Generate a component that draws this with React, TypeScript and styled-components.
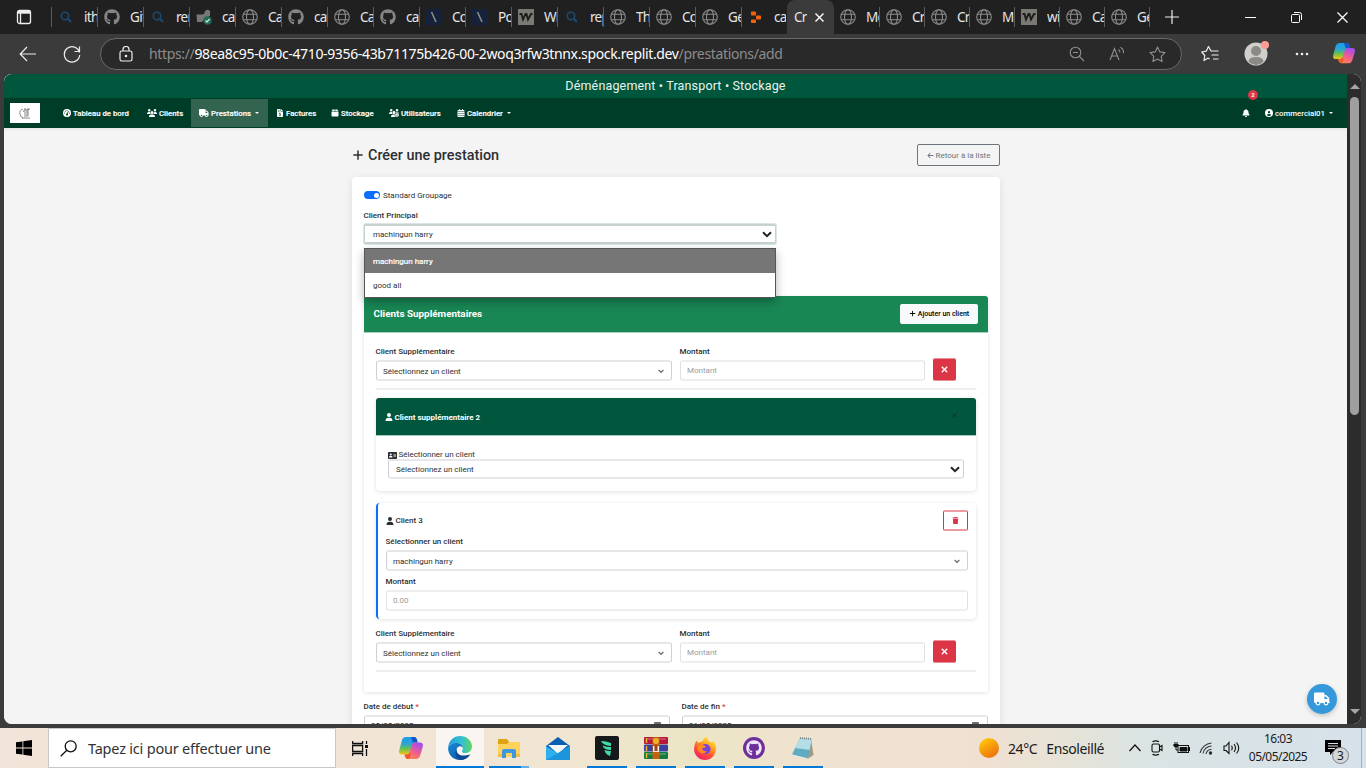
import React from 'react';
import styled, { createGlobalStyle, css } from 'styled-components';
import {
  FaUsers, FaTruck, FaFileInvoiceDollar, FaBox, FaUsersGear, FaCalendarDays, FaBell, FaCircleUser,
  FaPlus, FaArrowLeft, FaXmark, FaUser, FaAddressCard, FaTrash, FaGaugeHigh, FaGithub,
} from 'react-icons/fa6';

const Global = createGlobalStyle`
  * { box-sizing: border-box; }
  html, body { margin: 0; padding: 0; overflow: hidden; background: #3b3b3b; }
  svg { display: block; flex: none; }
`;

const Screen = styled.div`
  width: 1366px; height: 768px; display: flex; flex-direction: column; overflow: hidden;
  background: #3b3b3b; font-family: "Noto Sans", "Open Sans", sans-serif;
`;

/* ---------- browser tabs ---------- */
const TabStrip = styled.div`
  height: 34px; flex: none; background: #202020; display: flex; color: #e6e6e6; font-size: 13.5px;
`;
const TabMenu = styled.div`
  width: 52px; flex: none; display: flex; align-items: center; padding-left: 16px; border-right: 1px solid #5c5c5c;
  height: 20px; margin-top: 7px;
`;
const Tab = styled.div<{ $w: number; $noline?: boolean }>`
  width: ${p => p.$w}px; height: 20px; margin-top: 7px; flex: none; display: flex; align-items: center;
  padding-left: 6px; gap: 10px; border-right: 1px solid ${p => (p.$noline ? 'transparent' : '#5c5c5c')};
  overflow: hidden; white-space: nowrap;
  span { flex: none; width: 13px; overflow: hidden; letter-spacing: -0.7px; line-height: 20px; }
`;
const ActiveTab = styled.div`
  width: 47px; flex: none; height: 34px; background: #3b3b3b; border-radius: 8px 8px 0 0; display: flex;
  align-items: center; padding-left: 7px; gap: 8px;
  span { width: 13px; overflow: hidden; letter-spacing: -0.7px; }
`;
const NewTab = styled.div`
  width: 43px; flex: none; display: flex; justify-content: center; align-items: center;
`;
const WindowButtons = styled.div`
  flex: 1; display: flex; justify-content: flex-end; align-items: center; gap: 35px; padding-right: 18px;
`;

type Fav = 'search' | 'github' | 'key' | 'globe' | 'slash' | 'w' | 'replit';

function Favicon({ kind }: { kind: Fav }) {
  if (kind === 'github') return <FaGithub size={16} color="#858585" />;
  if (kind === 'search')
    return (
      <svg width="16" height="16" viewBox="0 0 16 16" fill="none" stroke="#1d4a70" strokeWidth="1.6">
        <circle cx="7" cy="7" r="3.7" /><path d="M9.8 9.8 13 13" strokeWidth="2" />
      </svg>
    );
  if (kind === 'globe')
    return (
      <svg width="16" height="16" viewBox="0 0 16 16" fill="none" stroke="#8a8a8a" strokeWidth="1.1">
        <circle cx="8" cy="8" r="7.3" /><ellipse cx="8" cy="8" rx="3.5" ry="7.3" /><path d="M1.4 5.3h13.2M1.4 10.7h13.2" />
      </svg>
    );
  if (kind === 'slash')
    return (
      <svg width="16" height="16" viewBox="0 0 16 16"><path fill="#16213c" d="M0 0h16v16H0z" /><path d="m5.5 3 4.5 10" stroke="#8b8c82" strokeWidth="1.6" /></svg>
    );
  if (kind === 'w')
    return (
      <svg width="16" height="16" viewBox="0 0 16 16"><path fill="#7a7973" d="M0 0h16v16H0z" /><path d="M1.500 5h2L5 10.500 7.500 5h1L10 10.500 13 5h1.500" fill="none" stroke="#1c1c1b" strokeWidth="1.8" /></svg>
    );
  if (kind === 'replit')
    return (
      <svg width="16" height="16" viewBox="0 0 16 16" fill="#f26207"><rect x="3" y="2.500" width="5" height="4" rx=".8" /><rect x="8" y="6.500" width="5" height="4" rx=".8" /><rect x="3" y="10.500" width="5" height="3.500" rx=".8" /></svg>
    );
  return (
    <svg width="16" height="16" viewBox="0 0 16 16">
      <path d="M.5 5.500h5.500l2.500-1V3q2.500-4 5.500-1v5l-5 2-3 4H1z" fill="#777" /><circle cx="11.500" cy="11.500" r="4.300" fill="#1d6b52" />
      <path d="m9.500 11.500 1.500 1.500 2.600-3" fill="none" stroke="#ddd" strokeWidth="1.200" />
    </svg>
  );
}

const leftTabs: [Fav, string][] = [
  ['search', 'ith'], ['github', 'Git'], ['search', 'ren'], ['key', 'cav'], ['globe', 'Cav'], ['github', 'cav'],
  ['globe', 'Cav'], ['github', 'cav'], ['slash', 'Co'], ['slash', 'Po'], ['w', 'Wi'], ['search', 'rep'],
  ['globe', 'Th'], ['globe', 'Co'], ['globe', 'Ge'], ['replit', 'cav'],
];
const rightTabs: [Fav, string][] = [
  ['globe', 'Mo'], ['globe', 'Cr'], ['globe', 'Cr'], ['globe', 'Mo'], ['w', 'wi'], ['globe', 'Ca'], ['globe', 'Ge'],
];

/* ---------- address bar ---------- */
const AddressRow = styled.div`
  height: 39px; flex: none; display: flex; align-items: center; padding-left: 19px; color: #e8e8e8;
`;
const NavIcons = styled.div`
  width: 81px; flex: none; display: flex; gap: 26px; align-items: center;
`;
const UrlField = styled.div`
  width: 1082px; height: 32px; margin-top: 1px; flex: none; border: 1px solid #6a6a6a; border-radius: 16px; background: #292929;
  display: flex; align-items: center; padding: 0 15px 0 18px;
`;
const Url = styled.div`
  flex: 1; margin-left: 16px; font-size: 14px; color: #8c8c8c; white-space: nowrap; line-height: 20px; letter-spacing: -0.35px;
  b { color: #fff; font-weight: 400; }
`;
const FieldIcons = styled.div`
  display: flex; gap: 24px; align-items: center;
`;
const ToolIcons = styled.div`
  flex: 1; display: flex; align-items: center; padding-left: 19px;
`;
const Avatar = styled.div`
  margin-left: 25px; width: 24px; height: 24px; position: relative;
`;
const AvatarDot = styled.i`
  position: absolute; right: -1px; top: -1px; width: 8px; height: 8px; border-radius: 50%; background: #ff9d95;
`;
const MoreIcon = styled.svg`
  margin: 0 24px 0 27px;
`;

function Copilot({ size, id }: { size: number; id: string }) {
  return (
    <svg width={size} height={size * 0.92} viewBox="0 0 24 22">
      <defs>
        <linearGradient id={id + 'a'} x1="0" y1="0" x2="0" y2="1">
          <stop offset="0" stopColor="#1b9df0" /><stop offset=".4" stopColor="#2aa7d0" /><stop offset=".68" stopColor="#6cc24a" /><stop offset="1" stopColor="#f7c619" />
        </linearGradient>
        <linearGradient id={id + 'b'} x1=".7" y1="0" x2=".2" y2="1">
          <stop offset="0" stopColor="#a44df0" /><stop offset=".5" stopColor="#ef5c92" /><stop offset="1" stopColor="#ff8a48" />
        </linearGradient>
      </defs>
      <path d="M7 0h8q2 0 2.700 2l1 3.500h-3.200q-1.500 0-2 2L11 15q-.7 2.500-3 2.500H3Q-.7 17.500.3 13L3 3Q4 0 7 0z" fill={`url(#${id}a)`} />
      <path d="M12 0h3q2 0 2.700 2l1 3.500h-5z" fill="#1656c4" />
      <path d="M17 22H9q-2 0-2.700-2l-.8-2.500H8q2 0 2.700-2.500L13 7.500q.6-2 2.500-2H21q3.800 0 2.700 4.500L21 19q-1 3-4 3z" fill={`url(#${id}b)`} />
      <path d="M5.500 17.500H8q2 0 2.700-2.500l.8 3Q11 22 8.500 22q-1.500 0-2.200-2z" fill="#f2592a" />
    </svg>
  );
}

/* ---------- page viewport ---------- */
const ViewRow = styled.div`
  height: 650px; margin: 1px 5px 0 4px; flex: none; display: flex; border-radius: 8px; overflow: hidden; background: #f4f4f4;
`;
const Site = styled.div`
  width: 1343px; flex: none; position: relative; font-family: Roboto, sans-serif; font-size: 8px; color: #212529;
  overflow: hidden; background: #f4f4f4;
`;
const Scrollbar = styled.div`
  flex: 1; background: #2c2c2c; display: flex; flex-direction: column; align-items: center; padding: 10px 0 10px 1px;
`;
const Thumb = styled.div`
  width: 9px; height: 318px; border-radius: 5px; background: #9f9f9f; margin: 8px 0 auto;
`;
const Arrow = styled.i<{ $down?: boolean }>`
  border: 5px solid transparent; border-top-width: 0; border-bottom: 5px solid #a6a6a6;
  ${p => p.$down && css`transform: rotate(180deg);`}
`;
const Slogan = styled.div`
  height: 24px; background: #00573d; color: #e9f3ef; display: flex; align-items: center; justify-content: center;
  font-size: 12.500px; letter-spacing: 0.16px; padding-bottom: 1px;
`;
const NavBar = styled.div`
  height: 30px; background: #003d29; display: flex; align-items: center; padding: 0 14px 0 6px; color: #fff;
  font-weight: 500; font-size: 7.800px; box-shadow: 0 1px 3px rgba(0,0,0,.08); position: relative;
`;
const Logo = styled.div`
  width: 30px; height: 20px; background: #fff; display: flex; justify-content: center; align-items: center; margin-right: 15px;
`;
const NavItem = styled.div<{ $active?: boolean; $w?: number }>`
  height: 28px; padding: 0 8px; width: ${p => (p.$w ? p.$w + 'px' : 'auto')}; display: flex; align-items: center; gap: 2px;
  white-space: nowrap; background: ${p => (p.$active ? '#33644f' : 'transparent')}; -webkit-text-stroke: 0.15px #fff;
`;
const Caret = styled.i`
  border: 2px solid transparent; border-top-color: #fff; border-bottom: 0; margin-left: 2px;
`;
const NavRight = styled.div`
  margin-left: auto; display: flex; align-items: center; gap: 15px;
`;
const Bell = styled.div`
  position: relative;
`;
const BellBadge = styled.span`
  position: absolute; left: 6px; top: -19px; width: 10px; height: 10px; border-radius: 5px; background: #dc3545;
  font-size: 6px; font-weight: 700; line-height: 10px; text-align: center;
`;
const UserMenu = styled.div`
  display: flex; align-items: center; gap: 2px;
`;

const Container = styled.main`
  width: 648px; margin-left: 348px;
`;
const PageHead = styled.div`
  height: 49px; padding-top: 5px; display: flex; align-items: center; justify-content: space-between;
`;
const Title = styled.h1`
  margin: 0; font-size: 14.400px; font-weight: 500; display: flex; align-items: center; gap: 4px; color: #2b2f33;
`;
const BackButton = styled.button`
  width: 83px; height: 22px; padding: 0; border: 1px solid #6c757d; border-radius: 2px; background: transparent; color: #6c757d;
  font: 400 8px Roboto, sans-serif; display: flex; align-items: center; justify-content: center; gap: 2px;
`;
const FormCard = styled.section`
  background: #fff; border-radius: 4px; height: 620px; padding: 13px 12px; box-shadow: 0 2px 8px rgba(0,0,0,.09);
`;
const SwitchRow = styled.div`
  height: 10px; display: flex; align-items: center; gap: 3.500px;
`;
const Switch = styled.div`
  width: 16px; height: 8px; border-radius: 4px; background: #0d6efd; display: flex; justify-content: flex-end; align-items: center; padding-right: 1.500px;
  &::after { content: ''; width: 5px; height: 5px; border-radius: 50%; background: #fff; }
`;
const Label = styled.label<{ $mt?: number; $weight?: number }>`
  display: flex; align-items: center; gap: 2px; height: 10px; margin-top: ${p => p.$mt ?? 0}px; padding-top: 2px; margin-left: -0.5px; font-size: 8px;
  font-weight: ${p => p.$weight ?? 500}; line-height: 10px; white-space: nowrap; color: #2b2f33;
  em { color: #dc3545; font-style: normal; }
`;
const SelectAnchor = styled.div`
  position: relative; width: 412px; margin-top: 4px;
`;
const Field = styled.div<{ $h?: number; $mt?: number; $pad?: number; $right?: number; $drop?: number; $muted?: boolean; $focus?: boolean }>`
  height: ${p => p.$h ?? 21}px; margin-top: ${p => p.$mt ?? 0}px; border: solid ${p => (p.$muted ? '#e0e0e2' : '#cfcfd7')};
  border-width: 2px 1px; border-top-color: ${p => (p.$muted ? '#eeeeef' : '#e6e6eb')}; border-bottom-color: ${p => (p.$muted ? '#eeeeef' : '#e6e6eb')};
  border-radius: 3px; background: #fff; display: flex; align-items: center; justify-content: space-between;
  padding: ${p => p.$drop ?? 0}px ${p => p.$right ?? 7}px 0 ${p => p.$pad ?? 6}px; font-size: 8px; color: ${p => (p.$muted ? '#999ca0' : '#2b2f33')}; white-space: nowrap;
  ${p => p.$focus && css`border-color: #c6d2d2; box-shadow: 0 0 0 1px #dbe6e4; border-radius: 2px;`}
`;
const Options = styled.ul`
  position: absolute; z-index: 3; left: 0; top: 24px; width: 412px; margin: 0; padding: 0; list-style: none;
  border: 1px solid #565656; background: #fff; box-shadow: 0 4px 9px rgba(0,0,0,.3);
`;
const Option = styled.li<{ $on?: boolean }>`
  height: 24px; line-height: 25px; padding-left: 8px; font-size: 8px; background: ${p => (p.$on ? '#767676' : '#fff')};
  color: ${p => (p.$on ? '#fff' : '#333')}; ${p => p.$on && css`-webkit-text-stroke: .2px #fff;`}
`;
const Extra = styled.section`
  margin-top: 52px; height: 396px; border-radius: 3px; background: #fff; box-shadow: 0 1px 4px rgba(0,0,0,.12);
`;
const ExtraHead = styled.header`
  height: 36.500px; background: #198754; border-bottom: 1px solid #a9d0bd; border-radius: 3px 3px 0 0; padding: 0 10px 0 9.500px;
  display: flex; align-items: center; justify-content: space-between; color: #fff; font-weight: 700; font-size: 9.900px;
`;
const AddButton = styled.button`
  width: 78px; height: 20px; padding: 0; border: 0; border-radius: 2px; background: #f8f9fa; color: #000;
  font: 500 7px Roboto, sans-serif; display: flex; align-items: center; justify-content: center; gap: 2px; white-space: nowrap;
`;
const ExtraBody = styled.div`
  padding: 13.500px 12px 0;
`;
const LineRow = styled.div<{ $mt?: number }>`
  display: grid; grid-template-columns: 296px 245px 23px; column-gap: 8px; height: 44px; margin-top: ${p => p.$mt ?? 0}px;
  border-bottom: 2px solid #efeff3;
`;
const RemoveButton = styled.button`
  height: 23px; margin-top: 12px; padding: 0; border: 0; border-top: 1px solid #e98d96; border-bottom: 1px solid #e98d96;
  border-radius: 2px; background: #dc3545; color: #fff; display: flex; align-items: center; justify-content: center;
`;
const ClientCard = styled.div`
  height: 93px; margin-top: 8px; border-radius: 4px; box-shadow: 0 1px 4px rgba(0,0,0,.13); background: #fff;
`;
const ClientHead = styled.div`
  height: 38px; border-bottom: 1px solid #a3c4b9; border-radius: 3px 3px 0 0; background: #00573d; color: #fff; font-weight: 700;
  font-size: 8px; display: flex; align-items: center; gap: 1.500px; padding: 1px 18px 0 9px;
`;
const Cross = styled.span`
  margin: -4px 0 0 auto; color: #123028;
`;
const ClientBody = styled.div`
  padding: 13px 12px;
`;
const BlueCard = styled.div`
  height: 116px; margin-top: 12px; padding: 7px 8px 0 8px; border-left: 2px solid #0d6efd; border-radius: 4px;
  box-shadow: 0 1px 4px rgba(0,0,0,.12); background: #fff;
`;
const BlueHead = styled.div`
  height: 20px; display: flex; align-items: center; justify-content: space-between;
`;
const TrashButton = styled.button`
  width: 25px; height: 21px; padding: 0; border: 1px solid #dc3545; border-top: 2px solid #ee9aa2; border-bottom: 2px solid #ee9aa2; border-radius: 2px;
  background: #fff; color: #dc3545; display: flex; align-items: center; justify-content: center;
`;
const Dates = styled.div`
  display: grid; grid-template-columns: 306px 306px; column-gap: 12px; margin-top: 9px;
`;
const DatePicker = styled.i`
  width: 7px; height: 7px; border-radius: 1px; background: #6d6d6d; margin-right: 1px;
`;
const Fab = styled.div`
  position: absolute; left: 1303px; top: 610px; width: 30px; height: 30px; border-radius: 50%; background: #3498db; color: #fff;
  display: flex; align-items: center; justify-content: center; box-shadow: 0 2px 5px rgba(0,0,0,.2);
`;

const Chevron = ({ bold }: { bold?: boolean }) =>
  bold ? (
    <svg width="10" height="7" viewBox="0 0 10 7" fill="none" stroke="#1f2327" strokeWidth="2"><path d="m1 1.200 4 4 4-4" /></svg>
  ) : (
    <svg width="6" height="5" viewBox="0 0 6 5" fill="none" stroke="#6a6e72" strokeWidth="1.200"><path d="m.6 1 2.400 2.300L5.400 1" /></svg>
  );

function ExtraLine({ mt }: { mt?: number }) {
  return (
    <LineRow $mt={mt}>
      <div>
        <Label>Client Supplémentaire</Label>
        <Field $mt={4} $drop={1}>Sélectionnez un client<Chevron /></Field>
      </div>
      <div>
        <Label>Montant</Label>
        <Field $mt={4} $muted>Montant</Field>
      </div>
      <RemoveButton><FaXmark size={9} stroke="#fff" strokeWidth={20} /></RemoveButton>
    </LineRow>
  );
}

/* ---------- taskbar ---------- */
const Taskbar = styled.footer`
  height: 40px; margin-top: 4px; flex: none; display: flex; color: #1a1a1a;
  background: linear-gradient(90deg, #f1e4d8 0%, #f1e5d6 32%, #efe5d0 43%, #ece5c4 51%, #efe3cf 58%, #f1e1d3 67%, #f0e0d2 72%, #e6e3d6 78%, #dae4e4 84%, #d6e1ea 100%);
`;
const Start = styled.div`
  width: 48px; display: flex; align-items: center; justify-content: center; flex: none;
`;
const SearchBox = styled.div`
  width: 288px; flex: none; background: #fff; border: 1px solid #c8c8c8; display: flex; align-items: center; padding-left: 11px; gap: 11px;
  font-size: 14.500px; letter-spacing: -0.210px; color: #333; white-space: nowrap;
`;
const TaskView = styled.div`
  width: 51px; flex: none; display: flex; align-items: center; justify-content: center; padding-right: 3px;
`;
const Apps = styled.div`
  display: flex; gap: 1px; flex: none;
`;
const AppButton = styled.div<{ $open?: boolean; $current?: boolean; $multi?: boolean }>`
  width: 48px; height: 40px; display: flex; align-items: center; justify-content: center; position: relative;
  background: ${p => (p.$current ? '#faf5f0' : 'transparent')};
  &::after {
    content: ''; position: absolute; bottom: 0; height: 2px; left: ${p => (p.$current ? 0 : 4)}px; right: ${p => (p.$current ? 0 : 4)}px;
    background: ${p => (p.$multi ? 'linear-gradient(90deg,#0078d7 80%,#66aee8 80%)' : p.$open ? '#0078d7' : 'transparent')};
  }
`;
const Tray = styled.div`
  margin-left: auto; width: 388px; flex: none; display: flex; align-items: center; height: 40px;
`;
const Weather = styled.div`
  display: flex; align-items: center; font-size: 14px; letter-spacing: -0.400px; width: 151px; gap: 9px; white-space: nowrap;
`;
const Sun = styled.i`
  width: 20px; height: 20px; border-radius: 50%; background: linear-gradient(150deg, #ffc80a 10%, #f79a0d 50%, #e8660c 100%); margin-left: 1px;
`;
const TrayIcons = styled.div`
  display: flex; align-items: center; justify-content: space-between; width: 111px;
`;
const Clock = styled.div`
  width: 76px; text-align: center; font-size: 12px; line-height: 18px; letter-spacing: -0.550px;
`;
const Notice = styled.div`
  position: relative; margin-left: 9px; width: 16px; height: 16px;
`;
const NoticeCount = styled.span`
  position: absolute; left: 7px; top: 7px; width: 17px; height: 17px; border-radius: 50%; background: #d3d7da; border: 1px solid #7b8085;
  font-size: 12px; line-height: 15px; text-align: center;
`;
const DesktopEdge = styled.i`
  margin-left: auto; margin-right: 4px; width: 1px; height: 40px; background: #a9b0b5;
`;

const EdgeLogo = () => (
  <svg width="24" height="24" viewBox="0 0 24 24">
    <defs>
      <linearGradient id="e1" x1="0" y1=".3" x2="1" y2=".3"><stop offset="0" stopColor="#1fa0dc" /><stop offset=".6" stopColor="#35c1cf" /><stop offset="1" stopColor="#62d957" /></linearGradient>
      <linearGradient id="e2" x1="0" y1="0" x2="1" y2="1"><stop offset="0" stopColor="#168ad8" /><stop offset="1" stopColor="#0c4c9c" /></linearGradient>
    </defs>
    <path d="M.2 11C.8 4.500 6 0 12 0c7 0 12 5 12 10.500 0 4-3 6.500-6.500 6.500-2.800 0-4.300-1.200-3.300-2.600C16.500 11 13.500 7 9 7 4 7 1 9 .2 11z" fill="url(#e1)" />
    <path d="M.1 12C.5 9 4 7 8.500 7c4 0 6.500 2.500 6.500 5-1-1.500-2.500-2-4-1.500-3 1-3 4.500-1.500 6.800 2.500 3.700 7.500 4 12.500 1.200C19.500 22.500 16 24 12 24 5 24 0 18.500.1 12z" fill="url(#e2)" />
    <path d="M8.700 13c-.8 5 3.500 8.500 13.300 5.500-2 3.500-5.500 5.300-9.500 5.500C8 22.500 6 18 8.700 13z" fill="#0d4a94" />
  </svg>
);
const FolderLogo = () => (
  <svg width="22" height="19" viewBox="0 0 22 19">
    <path d="M0 1q0-1 1-1h8l2 3h10q1 0 1 1v13H0z" fill="#e0a30e" /><path d="M0 5h9l2-2h10q1 0 1 1v14H0z" fill="#ffd35b" />
    <path d="M4 12q0-2 2-2h10q2 0 2 2v7h-4v-5H8v5H4z" fill="#3f97dd" /><path d="M0 15h4v3H0zM18 15h4v3h-4z" fill="#f5bf3d" />
  </svg>
);
const MailLogo = () => (
  <svg width="24" height="23" viewBox="0 0 24 23">
    <path d="M0 9 12 0l12 9v14H0z" fill="#0a5fb4" /><path d="M2 8h20l-10 9z" fill="#f4f7fa" />
    <path d="m0 9 12 7.500L24 9v14H0z" fill="#2cb1ee" /><path d="M0 23 24 9v14z" fill="#1c95dd" />
  </svg>
);
const LeafLogo = () => (
  <svg width="24" height="24" viewBox="0 0 24 24">
    <rect width="24" height="24" rx="2" fill="#15191a" />
    <path d="M6 5q5 .2 10 2v3Q8 9.500 6 5zM7.500 9.500q4 1.500 8.500 1.500v3q-7 0-8.500-4.500zM9.500 14q3 1 6.500 1l-1 5q-5-2-5.500-6z" fill="#3fdcac" />
  </svg>
);
const ArchiveLogo = () => (
  <svg width="24" height="22" viewBox="0 0 24 22">
    <rect width="24" height="7" rx="1" fill="#b6183c" /><rect y="7.500" width="24" height="7" rx="1" fill="#3b3f9e" /><rect y="15" width="24" height="7" rx="1" fill="#157a3e" />
    <path d="M2 2h20M2 17h20" stroke="#ffffff66" /><path d="M2.500 1v5M2.500 9v5M2.500 16v5" stroke="#e8b42c" strokeWidth="1.500" />
    <rect x="8.500" width="7" height="22" fill="#c4620f" /><circle cx="12" cy="4" r="3" fill="#f2b02b" /><path d="M9 9h6v6H9z" fill="#eee" /><path d="M10.500 8h3v6h-3z" fill="#a5440d" />
  </svg>
);
const FoxLogo = () => (
  <svg width="24" height="24" viewBox="0 0 24 24">
    <defs><linearGradient id="fx" x1=".8" y1="0" x2=".25" y2="1"><stop offset="0" stopColor="#fff04a" /><stop offset=".35" stopColor="#ffa81f" /><stop offset=".65" stopColor="#ff5038" /><stop offset="1" stopColor="#ef1f6c" /></linearGradient></defs>
    <path d="M3.500 4.500 5.500 7q1.500-1.500 3.500-1.300Q11 1.500 14 .5q0 3.500 3.500 5.500 2.500 1.300 2.500-1.500 3 3.500 3 8.500A11 11 0 0 1 1 13Q1 8 3.500 4.500z" fill="url(#fx)" />
    <circle cx="12.500" cy="13" r="5" fill="#7544dc" /><path d="M6 9q4-1 7 1.500-1 2-4 1.800 1 3.500 5 2.700-3 4.500-7.500 1T6 9z" fill="#ff8a20" />
  </svg>
);
const NoteLogo = () => (
  <svg width="24" height="23" viewBox="0 0 24 23">
    <path d="m20 2 2.500 16-6 4z" fill="#a39a86" /><path d="m9 1 12 1-4 19.500-16-4z" fill="#5fabc1" /><path d="m9 1 12 1-2.500 11L4 11z" fill="#b4dde6" />
    <path d="m9 1 12 1" stroke="#7f8c90" strokeWidth="2" strokeDasharray="1 1" /><path d="m1 17.500 16 4 1 .5-17-3.500z" fill="#dce9ea" />
  </svg>
);

export default function App() {
  return (
    <Screen>
      <Global />
      <TabStrip>
        <TabMenu>
          <svg width="16" height="16" viewBox="0 0 16 16" fill="none" stroke="#eee" strokeWidth="1.300"><rect x="1.500" y="1.500" width="13" height="13" rx="2" /><path d="M1.500 3.200h13" strokeWidth="3" /><path d="M4.500 4v10.500" /></svg>
        </TabMenu>
        {leftTabs.map(([k, t], i) => (
          <Tab key={i} $w={i === 15 ? 45 : 46} $noline={i === 15}><Favicon kind={k} /><span>{t}</span></Tab>
        ))}
        <ActiveTab>
          <span>Cr</span>
          <svg width="9" height="9" viewBox="0 0 9 9" stroke="#fff" strokeWidth="1.400"><path d="m.5.5 8 8M8.500.5l-8 8" /></svg>
        </ActiveTab>
        {rightTabs.map(([k, t], i) => (
          <Tab key={i} $w={i ? 45 : 46}><Favicon kind={k} /><span>{t}</span></Tab>
        ))}
        <NewTab><svg width="14" height="14" viewBox="0 0 14 14" stroke="#eee" strokeWidth="1.200"><path d="M7 0v14M0 7h14" /></svg></NewTab>
        <WindowButtons>
          <svg width="11" height="11" viewBox="0 0 11 11" stroke="#fff"><path d="M0 5.500h11" /></svg>
          <svg width="11" height="11" viewBox="0 0 11 11" fill="none" stroke="#fff"><rect x=".5" y="2.500" width="8" height="8" rx="1" /><path d="M3 .5h5.500q2 0 2 2V8" /></svg>
          <svg width="11" height="11" viewBox="0 0 11 11" stroke="#fff" strokeWidth="1.200"><path d="m.5.500 10 10M10.500.5l-10 10" /></svg>
        </WindowButtons>
      </TabStrip>

      <AddressRow>
        <NavIcons>
          <svg width="18" height="16" viewBox="0 0 18 16" fill="none" stroke="#eee" strokeWidth="1.200"><path d="M17 8H1.500M8 1 1.200 8 8 15" /></svg>
          <svg width="18" height="18" viewBox="0 0 18 18" fill="none" stroke="#eee" strokeWidth="1.200"><path d="M16.500 7.500A7.700 7.700 0 1 0 16.700 10M16.500 1.500v5h-5" /></svg>
        </NavIcons>
        <UrlField>
          <svg width="14" height="16" viewBox="0 0 14 16" fill="none" stroke="#eee" strokeWidth="1.200"><rect x="1" y="5" width="12" height="10" rx="1.800" /><path d="M4 5V3.500a3 3 0 0 1 6 0V5" /><circle cx="7" cy="10" r=".7" fill="#fff" /></svg>
          <Url>https://<b>98ea8c95-0b0c-4710-9356-43b71175b426-00-2woq3rfw3tnnx.spock.replit.dev</b>/prestations/add</Url>
          <FieldIcons>
            <svg width="16" height="16" viewBox="0 0 16 16" fill="none" stroke="#8f8f8f" strokeWidth="1.100"><circle cx="6.500" cy="6.500" r="5.300" /><path d="m10.500 10.500 4.500 4.500M4 6.500h5" /></svg>
            <svg width="16" height="16" viewBox="0 0 16 16" fill="none" stroke="#8f8f8f" strokeWidth="1.100"><path d="M1 14 5.500 2.500 10 14M2.500 10h6M9.500 3.500q1.500 1 1.300 3M11.500 1.300q3.300 2 3 6" /></svg>
            <svg width="17" height="17" viewBox="0 0 17 17" fill="none" stroke="#8f8f8f" strokeWidth="1.100" strokeLinejoin="round"><path d="m8.500 1 2.300 4.900 5.200.7-3.800 3.700.9 5.300-4.600-2.500-4.600 2.500.9-5.300L1 6.600l5.200-.7z" /></svg>
          </FieldIcons>
        </UrlField>
        <ToolIcons>
          <svg width="18" height="17" viewBox="0 0 18 17" fill="none" stroke="#eee" strokeWidth="1.200" strokeLinejoin="round"><path d="M7 13l-4 2.500.8-5L.7 7l4.500-.8L7.500 1.500 10 6h7.500M10.500 10h7M12 14h5.500M7 13l1.500.9" /></svg>
          <Avatar>
            <svg width="24" height="24" viewBox="0 0 24 24"><circle cx="12" cy="12" r="11.500" fill="#d1cfcc" /><circle cx="12" cy="9" r="5" fill="#8d8985" /><path d="M4.500 20q0-5 7.500-5t7.500 5q-7 6-15 0z" fill="#8d8985" /></svg>
            <AvatarDot />
          </Avatar>
          <MoreIcon width="14" height="4" viewBox="0 0 14 4" fill="#eee"><circle cx="2" cy="2" r="1.300" /><circle cx="7" cy="2" r="1.300" /><circle cx="12" cy="2" r="1.300" /></MoreIcon>
          <Copilot size={22} id="top" />
        </ToolIcons>
      </AddressRow>

      <ViewRow>
        <Site>
          <Slogan>Déménagement • Transport • Stockage</Slogan>
          <NavBar>
            <Logo>
              <svg width="14" height="16" viewBox="0 0 14 16" fill="none" stroke="#716c69" strokeWidth="1"><path d="M5 4Q1 5 2 9t3 4M7 3v9M5 7q3-5 4-1v6M10 3v8M9 5l3-1M4 13h8" opacity=".8" /></svg>
            </Logo>
            <NavItem $w={84}><FaGaugeHigh size={8} />Tableau de bord</NavItem>
            <NavItem $w={52}><FaUsers size={10} />Clients</NavItem>
            <NavItem $w={77} $active><FaTruck size={10} />Prestations<Caret /></NavItem>
            <NavItem $w={55}><FaFileInvoiceDollar size={8} />Factures</NavItem>
            <NavItem $w={58}><FaBox size={8} />Stockage</NavItem>
            <NavItem $w={68}><FaUsersGear size={10} />Utilisateurs</NavItem>
            <NavItem><FaCalendarDays size={8} />Calendrier<Caret /></NavItem>
            <NavRight>
              <Bell><FaBell size={8} /><BellBadge>2</BellBadge></Bell>
              <UserMenu><FaCircleUser size={8} />commercial01<Caret /></UserMenu>
            </NavRight>
          </NavBar>

          <Container>
            <PageHead>
              <Title><FaPlus size={12} />Créer une prestation</Title>
              <BackButton><FaArrowLeft size={7} />Retour à la liste</BackButton>
            </PageHead>
            <FormCard>
              <SwitchRow><Switch /><Label $weight={400}>Standard Groupage</Label></SwitchRow>
              <Label $mt={10}>Client Principal</Label>
              <SelectAnchor>
                <Field $h={20} $pad={8} $right={3} $focus>machingun harry<Chevron bold /></Field>
                <Options>
                  <Option $on>machingun harry</Option>
                  <Option>good all</Option>
                </Options>
              </SelectAnchor>
              <Extra>
                <ExtraHead>Clients Supplémentaires<AddButton><FaPlus size={7} />Ajouter un client</AddButton></ExtraHead>
                <ExtraBody>
                  <ExtraLine />
                  <ClientCard>
                    <ClientHead><FaUser size={8} />Client supplémentaire 2<Cross><FaXmark size={7} /></Cross></ClientHead>
                    <ClientBody>
                      <Label $weight={400}><FaAddressCard size={9} />Sélectionner un client</Label>
                      <Field $h={20} $pad={7} $right={3}>Sélectionnez un client<Chevron bold /></Field>
                    </ClientBody>
                  </ClientCard>
                  <BlueCard>
                    <BlueHead><Label><FaUser size={8} />Client 3</Label><TrashButton><FaTrash size={7} /></TrashButton></BlueHead>
                    <Label $mt={6}>Sélectionner un client</Label>
                    <Field $mt={4} $drop={1}>machingun harry<Chevron /></Field>
                    <Label $mt={5}>Montant</Label>
                    <Field $mt={4} $muted>0.00</Field>
                  </BlueCard>
                  <ExtraLine mt={9} />
                </ExtraBody>
              </Extra>
              <Dates>
                <div><Label>Date de début <em>*</em></Label><Field $mt={4}>05/05/2025<DatePicker /></Field></div>
                <div><Label>Date de fin <em>*</em></Label><Field $mt={4}>06/05/2025<DatePicker /></Field></div>
              </Dates>
            </FormCard>
          </Container>
          <Fab><FaTruck size={16} /></Fab>
        </Site>
        <Scrollbar><Arrow /><Thumb /><Arrow $down /></Scrollbar>
      </ViewRow>

      <Taskbar>
        <Start><svg width="16" height="16" viewBox="0 0 16 16" fill="#000"><path d="m0 2.300 6.500-.9v6.200H0zM7.300 1.300 16 0v7.600H7.300zM0 8.400h6.500v6.200L0 13.700zM7.300 8.400H16V16l-8.700-1.300z" /></svg></Start>
        <SearchBox>
          <svg width="17" height="17" viewBox="0 0 17 17" fill="none" stroke="#111" strokeWidth="1.300"><circle cx="10.700" cy="6.300" r="5.500" /><path d="M6.800 10.300.7 16.300" /></svg>
          Tapez ici pour effectuer une
        </SearchBox>
        <TaskView><svg width="16" height="15" viewBox="0 0 16 15" fill="none" stroke="#111" strokeWidth="1.300"><path d="M.6 0v2.500h10V0M.6 15v-2.500h10V15M.6 4.500h10v6H.600zM14.500 0v3M14.500 8v7" /><path d="M13 4h3v3h-3z" fill="#111" stroke="none" /></svg></TaskView>
        <Apps>
          <AppButton><Copilot size={24} id="bar" /></AppButton>
          <AppButton $open $current><EdgeLogo /></AppButton>
          <AppButton $open $multi><FolderLogo /></AppButton>
          <AppButton><MailLogo /></AppButton>
          <AppButton $open><LeafLogo /></AppButton>
          <AppButton $open><ArchiveLogo /></AppButton>
          <AppButton $open><FoxLogo /></AppButton>
          <AppButton $open>
            <svg width="22" height="22" viewBox="0 0 22 22"><circle cx="11" cy="11" r="11" fill="#6e2f9d" /><g transform="translate(3 3)"><FaGithub size={16} color="#efe3f6" /></g></svg>
          </AppButton>
          <AppButton $open><NoteLogo /></AppButton>
        </Apps>
        <Tray>
          <Weather><Sun /><span>24°C</span><span>Ensoleillé</span></Weather>
          <TrayIcons>
            <svg width="12" height="8" viewBox="0 0 12 8" fill="none" stroke="#111" strokeWidth="1.200"><path d="m.5 7 5.500-6 5.500 6" /></svg>
            <svg width="12" height="16" viewBox="0 0 12 16" fill="none" stroke="#111" strokeWidth="1.100"><rect x="1" y="4" width="7.500" height="8" rx="1.500" /><path d="m8.500 7 2.500-1.500v5L8.500 9M1.500 1.800q3.300-1.800 6.500 0M1.500 14.200q3.300 1.800 6.500 0" /></svg>
            <svg width="17" height="13" viewBox="0 0 17 13" fill="none" stroke="#111" strokeWidth="1"><rect x="5" y="3.500" width="10.500" height="7" /><path d="M7 5.500h7v3.500H7zM16 5.500h1v3h-1z" fill="#111" /><path d="M2 0v2M4 0v2M.8 2.500h4.400v1q0 1.500-2.200 1.500T.8 3.500z" fill="#111" /><path d="M3 5v3h2" /></svg>
            <svg width="14" height="14" viewBox="0 0 14 14" fill="none" stroke="#333" strokeWidth="1.100"><path d="M1 12A13 13 0 0 1 12.500 2M4 12.500A9.500 9.500 0 0 1 12.500 5M7 13A6 6 0 0 1 12.500 8.200" /><circle cx="11.500" cy="12" r="1.200" fill="#111" /></svg>
            <svg width="17" height="14" viewBox="0 0 17 14" fill="none" stroke="#111" strokeWidth="1.100"><path d="M1 5h2l3-3.500v11L3 9.500H1zM8.500 4.800q1.500 2.200 0 4.400M11 3q3 4 0 8M13.500 1.500q4.500 5.500 0 11" /></svg>
          </TrayIcons>
          <Clock>16:03<br />05/05/2025</Clock>
          <Notice>
            <svg width="16" height="16" viewBox="0 0 16 16"><path d="M0 0h16v12H8l-3 3v-3H0z" fill="#000" /><path d="M3 3.500h10M3 6h10M3 8.500h7" stroke="#d5dde4" /></svg>
            <NoticeCount>3</NoticeCount>
          </Notice>
          <DesktopEdge />
        </Tray>
      </Taskbar>
    </Screen>
  );
}
